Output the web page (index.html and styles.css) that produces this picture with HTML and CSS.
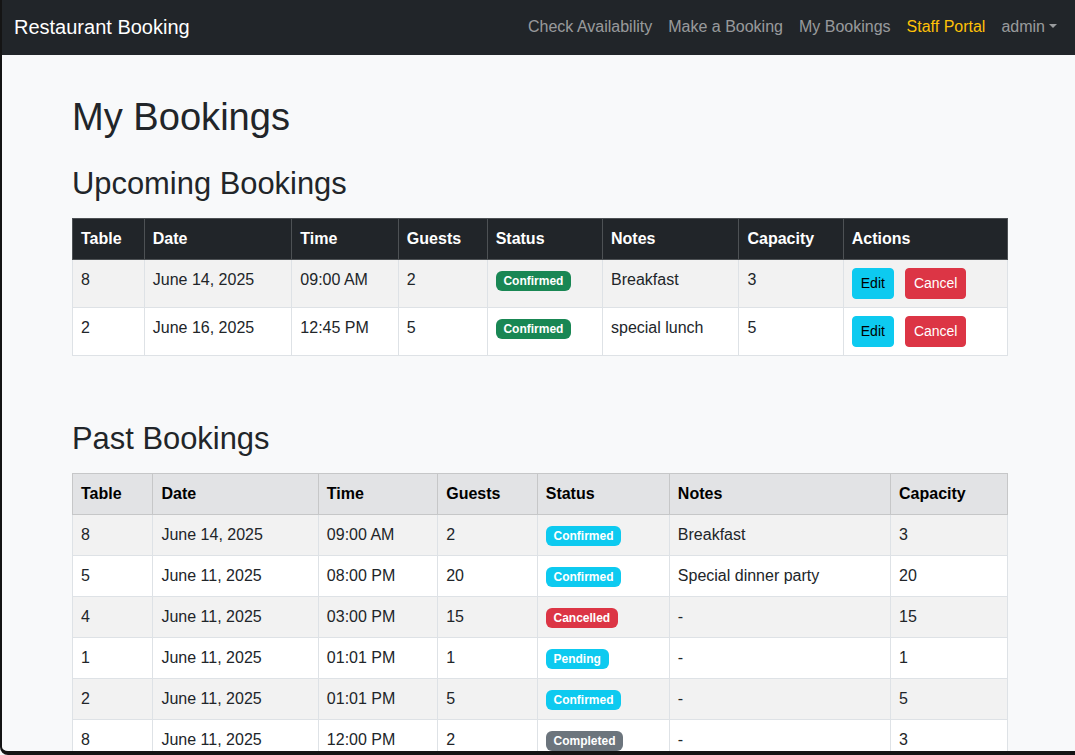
FILE: index.html
```html
<!DOCTYPE html>
<html lang="en">
<head>
<meta charset="utf-8">
<title>My Bookings</title>
<link rel="stylesheet" href="styles.css">
</head>
<body>
<div class="frame"></div>
<nav class="navbar">
  <a class="brand" href="#">Restaurant Booking</a>
  <div class="nav">
    <a href="#">Check Availability</a>
    <a href="#">Make a Booking</a>
    <a href="#">My Bookings</a>
    <a href="#" class="staff">Staff Portal</a>
    <a href="#" class="dropdown">admin</a>
  </div>
</nav>
<div class="page">
  <main class="container">
    <h1>My Bookings</h1>
    <h2>Upcoming Bookings</h2>
    <table class="table t-dark">
      <thead>
        <tr><th>Table</th><th>Date</th><th>Time</th><th>Guests</th><th>Status</th><th>Notes</th><th>Capacity</th><th>Actions</th></tr>
      </thead>
      <tbody>
        <tr><td>8</td><td>June 14, 2025</td><td>09:00 AM</td><td>2</td><td><span class="badge success">Confirmed</span></td><td>Breakfast</td><td>3</td><td><div class="actions"><button class="btn info">Edit</button><button class="btn danger">Cancel</button></div></td></tr>
        <tr><td>2</td><td>June 16, 2025</td><td>12:45 PM</td><td>5</td><td><span class="badge success">Confirmed</span></td><td>special lunch</td><td>5</td><td><div class="actions"><button class="btn info">Edit</button><button class="btn danger">Cancel</button></div></td></tr>
      </tbody>
    </table>

    <h2 class="past">Past Bookings</h2>
    <table class="table t-sec">
      <thead>
        <tr><th>Table</th><th>Date</th><th>Time</th><th>Guests</th><th>Status</th><th>Notes</th><th>Capacity</th></tr>
      </thead>
      <tbody>
        <tr><td>8</td><td>June 14, 2025</td><td>09:00 AM</td><td>2</td><td><span class="badge info">Confirmed</span></td><td>Breakfast</td><td>3</td></tr>
        <tr><td>5</td><td>June 11, 2025</td><td>08:00 PM</td><td>20</td><td><span class="badge info">Confirmed</span></td><td>Special dinner party</td><td>20</td></tr>
        <tr><td>4</td><td>June 11, 2025</td><td>03:00 PM</td><td>15</td><td><span class="badge danger">Cancelled</span></td><td>-</td><td>15</td></tr>
        <tr><td>1</td><td>June 11, 2025</td><td>01:01 PM</td><td>1</td><td><span class="badge info">Pending</span></td><td>-</td><td>1</td></tr>
        <tr><td>2</td><td>June 11, 2025</td><td>01:01 PM</td><td>5</td><td><span class="badge info">Confirmed</span></td><td>-</td><td>5</td></tr>
        <tr><td>8</td><td>June 11, 2025</td><td>12:00 PM</td><td>2</td><td><span class="badge secondary">Completed</span></td><td>-</td><td>3</td></tr>
      </tbody>
    </table>
  </main>
</div>
</body>
</html>
```

FILE: styles.css
```css
html {
  overflow: hidden;
}

body {
  margin: 0;
  padding-left: 2px;
  font-family: "Liberation Sans", Arial, sans-serif;
  font-size: 16px;
  line-height: 1.5;
  color: #212529;
  background: #f8f9fa;
}

.frame {
  position: fixed;
  top: 0;
  left: 0;
  right: 0;
  bottom: 0;
  border-left: 2px solid #141414;
  border-bottom: 4px solid #141414;
  border-bottom-left-radius: 8px;
  pointer-events: none;
  z-index: 10;
}

.navbar {
  background: #212529;
  height: 53px;
  display: flex;
  align-items: center;
  justify-content: space-between;
  padding: 0 10px 2px 12px;
}

.brand {
  color: #fff;
  font-size: 20px;
  text-decoration: none;
}

.nav {
  display: flex;
}

.nav a {
  color: rgba(255, 255, 255, 0.55);
  padding: 8px;
  text-decoration: none;
}

.nav a.staff {
  color: #ffc107;
}

.nav a.dropdown::after {
  content: "";
  display: inline-block;
  margin-left: 4px;
  vertical-align: 4px;
  border-top: 4.8px solid;
  border-left: 4.8px solid transparent;
  border-right: 4.8px solid transparent;
}

.page {
  padding-left: 3px;
}

.container {
  max-width: 936px;
  margin: 0 auto;
  padding: 0 12px;
}

h1 {
  font-size: 38.1px;
  font-weight: 500;
  line-height: 1.2;
  margin: 40px 0 24px;
}

h2 {
  font-size: 30.9px;
  font-weight: 500;
  line-height: 1.2;
  margin: 0 0 16px;
}

h2.past {
  margin-top: 64px;
}

.table {
  width: 100%;
  border-collapse: collapse;
  background: #fff;
  margin-bottom: 16px;
}

.table th,
.table td {
  padding: 8px;
  border: 1px solid #dee2e6;
  text-align: left;
  vertical-align: top;
}

.table th {
  font-weight: 700;
}

.table tbody tr:nth-child(odd) td {
  background: #f2f2f2;
}

.t-dark thead th {
  background: #212529;
  color: #fff;
  border-color: #4d5154;
}

.t-sec thead th {
  background: #e2e3e5;
  color: #000;
  border-color: #c6c7c8;
}

.badge {
  display: inline-block;
  padding: 0.35em 0.65em;
  font-size: 0.75em;
  font-weight: 700;
  line-height: 1;
  color: #fff;
  border-radius: 0.375rem;
  white-space: nowrap;
}

.badge.success { background: #198754; }
.badge.info { background: #0dcaf0; }
.badge.danger { background: #dc3545; }
.badge.secondary { background: #6c757d; }

.actions {
  display: flex;
  gap: 11px;
}

.btn {
  display: inline-block;
  padding: 4px 8px;
  font-family: inherit;
  font-size: 14px;
  line-height: 1.5;
  border: 1px solid transparent;
  border-radius: 4px;
  cursor: pointer;
}

.btn.info {
  background: #0dcaf0;
  border-color: #0dcaf0;
  color: #000;
}

.btn.danger {
  background: #dc3545;
  border-color: #dc3545;
  color: #fff;
}
```
